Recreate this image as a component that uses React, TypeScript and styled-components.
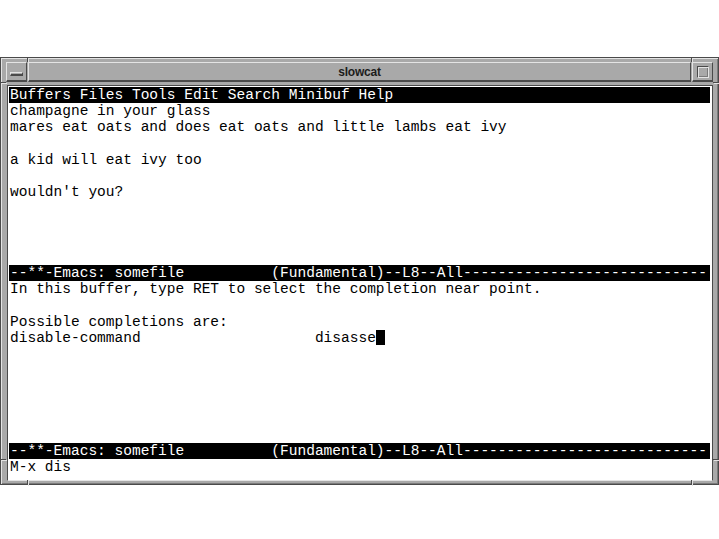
import React from "react";
import styled, { createGlobalStyle } from "styled-components";

const Global = createGlobalStyle`
  html, body { margin: 0; padding: 0; background: #ffffff; }
  body { width: 719px; height: 539px; overflow: hidden; }
`;

const DARK = "#4a4a4a";
const LIGHT = "#e4e4e4";
const GRAY = "#a9a9a9";

const Window = styled.div`
  position: relative;
  margin-top: 57px;
  width: 719px;
  height: 428px;
  box-sizing: border-box;
  background: ${GRAY};
  border: 1px solid ${DARK};
  box-shadow: inset 1px 1px 0 ${LIGHT}, inset -1px -1px 0 #7a7a7a;
  padding: 4px 5px 3px 6px;
  display: flex;
  flex-direction: column;
  gap: 3px;
`;

const TitleRow = styled.div`
  display: flex;
  height: 20px;
  gap: 1px;
  margin-left: -1px;
`;

const Bevel = styled.div`
  box-sizing: border-box;
  background: ${GRAY};
  border-top: 1px solid ${LIGHT};
  border-left: 1px solid ${LIGHT};
  border-right: 1px solid ${DARK};
  border-bottom: 2px solid ${DARK};
`;

const MenuButton = styled(Bevel)`
  width: 21px;
  display: flex;
  align-items: center;
  justify-content: center;
`;

const MenuBar = styled.div`
  width: 13px;
  height: 4px;
  box-sizing: border-box;
  background: ${GRAY};
  border-top: 1px solid ${LIGHT};
  border-left: 1px solid ${LIGHT};
  border-bottom: 2px solid ${DARK};
  border-right: 1px solid ${DARK};
  margin-top: 4px;
`;

const TitleBar = styled(Bevel)`
  flex: 1;
  display: flex;
  align-items: center;
  justify-content: center;
  font-family: "Liberation Sans", Arial, sans-serif;
  font-weight: bold;
  font-size: 12px;
  color: #1c1c1c;
  letter-spacing: -0.2px;
`;

const MaxButton = styled(Bevel)`
  width: 21px;
  display: flex;
  align-items: center;
  justify-content: center;
`;

const MaxSquare = styled.div`
  width: 12px;
  height: 12px;
  box-sizing: border-box;
  border-top: 1px solid ${DARK};
  border-left: 1px solid ${DARK};
  border-right: 1px solid ${LIGHT};
  border-bottom: 1px solid ${LIGHT};
  background: ${GRAY};
  box-shadow: inset 1px 1px 0 ${LIGHT}, inset -1px -1px 0 #7a7a7a;
`;

const Client = styled.div`
  flex: 1;
  box-sizing: border-box;
  background: #ffffff;
  border-top: 1px solid ${DARK};
  border-left: 1px solid ${DARK};
  border-right: 1px solid ${DARK};
  border-bottom: 1px solid ${LIGHT};
  padding: 1px 2px 0 1px;
  display: flex;
  flex-direction: column;
  font-family: "Liberation Mono", "DejaVu Sans Mono", monospace;
  font-size: 14.52px;
`;

const Line = styled.div<{ $inverse?: boolean }>`
  height: 16.2px;
  line-height: 16.2px;
  white-space: pre;
  padding-left: 1px;
  overflow: hidden;
  color: ${(p) => (p.$inverse ? "#ffffff" : "#000000")};
  background: ${(p) => (p.$inverse ? "#000000" : "transparent")};
`;

const Cursor = styled.span`
  display: inline-block;
  width: 8.71px;
  height: 15px;
  vertical-align: -3px;
  background: #000;
`;

const Notch = styled.div<{ $side: "h" | "v" }>`
  position: absolute;
  background: ${DARK};
  box-shadow: 1px 1px 0 ${LIGHT};
  width: ${(p) => (p.$side === "h" ? "1px" : "6px")};
  height: ${(p) => (p.$side === "h" ? "5px" : "1px")};
`;

const modeLine = (() => {
  const left = "--**-Emacs: somefile".padEnd(30, " ");
  const mid = "(Fundamental)--L8--All";
  const s = left + mid;
  return s + "-".repeat(80 - s.length);
})();

const topLines = [
  "champagne in your glass",
  "mares eat oats and does eat oats and little lambs eat ivy",
  "",
  "a kid will eat ivy too",
  "",
  "wouldn't you?",
  "",
  "",
  "",
  "",
];

const bottomLines = [
  "In this buffer, type RET to select the completion near point.",
  "",
  "Possible completions are:",
];

export default function App() {
  return (
    <>
      <Global />
      <Window>
        <Notch $side="h" style={{ left: 26, top: -1 }} />
        <Notch $side="h" style={{ right: 26, top: -1 }} />
        <Notch $side="h" style={{ left: 26, bottom: -1 }} />
        <Notch $side="h" style={{ right: 26, bottom: -1 }} />
        <Notch $side="v" style={{ left: -1, top: 24 }} />
        <Notch $side="v" style={{ right: -1, top: 24 }} />
        <Notch $side="v" style={{ left: -1, bottom: 24 }} />
        <Notch $side="v" style={{ right: -1, bottom: 24 }} />
        <TitleRow>
          <MenuButton>
            <MenuBar />
          </MenuButton>
          <TitleBar>slowcat</TitleBar>
          <MaxButton>
            <MaxSquare />
          </MaxButton>
        </TitleRow>
        <Client>
          <Line $inverse>Buffers Files Tools Edit Search Minibuf Help</Line>
          {topLines.map((t, i) => (
            <Line key={"t" + i}>{t}</Line>
          ))}
          <Line $inverse>{modeLine}</Line>
          {bottomLines.map((t, i) => (
            <Line key={"b" + i}>{t}</Line>
          ))}
          <Line>
            {"disable-command".padEnd(35, " ")}
            disasse
            <Cursor />
          </Line>
          {Array.from({ length: 6 }).map((_, i) => (
            <Line key={"e" + i} />
          ))}
          <Line $inverse>{modeLine}</Line>
          <Line>M-x dis</Line>
        </Client>
      </Window>
    </>
  );
}
